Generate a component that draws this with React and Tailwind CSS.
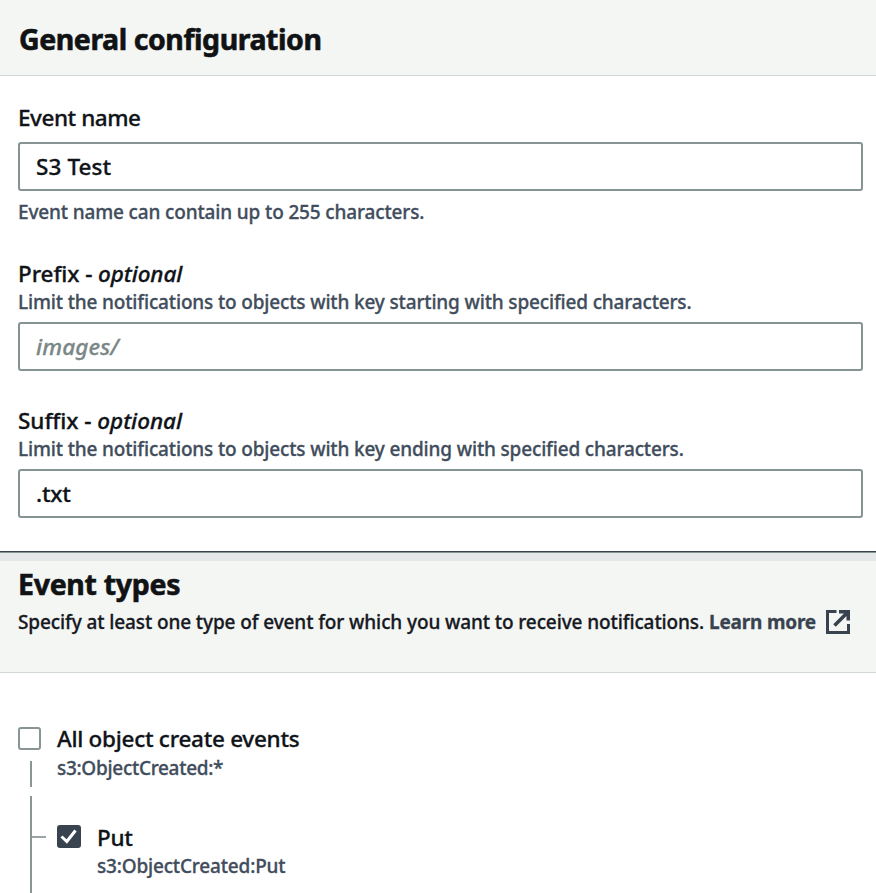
import React from 'react';

function Field({ label, optional, hint, value, placeholder, className, labelClass, valueClass, hintClass }) {
  return (
    <div className={className}>
      <label className="flex h-[30px] items-center text-[22.5px] leading-[30px] text-[#101419]">
        <span className={labelClass}>
          {label}
          {optional && <span> - <i>optional</i></span>}
        </span>
      </label>
      {hint && (
        <div className="mb-[6px] h-[27px] text-[19px] leading-[27px] text-[#414d5c]">
          <span className={hintClass}>{hint}</span>
        </div>
      )}
      <div className="flex h-[49px] items-center rounded-[3px] border-2 border-[#869393] bg-white px-4 pt-px text-[22.5px]">
        {value ? (
          <span className={valueClass}>{value}</span>
        ) : (
          <span className="tracking-[0.1px] italic text-[#7b8787]">{placeholder}</span>
        )}
      </div>
    </div>
  );
}

export default function App() {
  return (
    <div className="h-[893px] w-[876px] overflow-hidden bg-white font-['Noto_Sans',sans-serif] font-medium whitespace-nowrap [-webkit-text-stroke:0.3px_currentColor]">
      <header className="flex h-[76px] items-center border-b border-[#d0d5d5] bg-[#f4f6f4] pt-[2px] pl-[19px]">
        <h2 className="text-[28.5px] leading-10 font-bold tracking-[-0.45px] text-[#101214] [-webkit-text-stroke:0.6px_currentColor]">General configuration</h2>
      </header>
      <main className="flex h-[475px] flex-col pt-[27px] pr-[13px] pl-[18px]">
        <Field
          label="Event name"
          value="S3 Test"
          className="flex flex-col gap-[9px]"
          labelClass="tracking-[-0.45px]"
          valueClass="tracking-[0.1px] text-[#101419]"
        />
        <div className="mt-2 h-[27px] text-[19px] leading-[27px] tracking-[-0.15px] text-[#414d5c]">
          Event name can contain up to 255 characters.
        </div>
        <Field
          label="Prefix"
          optional
          hint="Limit the notifications to objects with key starting with specified characters."
          placeholder="images/"
          className="mt-[33px]"
          labelClass="tracking-[-0.1px]"
          hintClass="tracking-[-0.16px]"
        />
        <Field
          label="Suffix"
          optional
          hint="Limit the notifications to objects with key ending with specified characters."
          value=".txt"
          className="mt-[35px]"
          labelClass="tracking-[-0.05px]"
          hintClass="tracking-[-0.16px]"
          valueClass="tracking-[-0.2px] text-[#101419]"
        />
      </main>
      <section className="h-[122px] border-b border-[#d0d5d5] bg-[#f4f6f4]">
        <div className="h-px bg-[#38444e]" />
        <div className="h-px bg-[#87938f]" />
        <div className="h-2 bg-[#e4e8e8]" />
        <div className="pl-[18px]">
          <h2 className="h-[46px] text-[28.5px] leading-[47px] font-bold tracking-[-0.3px] text-[#101214] [-webkit-text-stroke:0.6px_currentColor]">Event types</h2>
          <div className="flex h-[30px] items-center text-[19px] leading-[30px] text-[#16191f]">
            <span className="w-[691px] tracking-[-0.11px]">
              Specify at least one type of event for which you want to receive notifications.
            </span>
            <span className="w-[117px] font-bold tracking-[-0.2px] text-[#38434f]">Learn more</span>
            <svg width="24" height="24" viewBox="0 0 24 24" fill="none" stroke="#38434f" strokeWidth="3">
              <path d="M10.5 1.5H1.5V22.5H22.5V14" />
              <path d="M13 1.7H22.3V10.5M21.5 2.5L8.5 15.5" strokeWidth="3.6" />
            </svg>
          </div>
        </div>
      </section>
      <section className="flex h-[220px] pt-[54px] pl-[18px]">
        <div className="flex w-[39px] flex-col">
          <div className="h-[23px] w-[23px] rounded-[3px] border-2 border-[#899494]" />
          <div className="mt-[11px] ml-[12px] h-[26px] w-[2px] bg-[#8a9696]" />
          <div className="mt-[9px] ml-[12px] flex h-[97px] w-[16px] border-l-2 border-[#8a9696]">
            <div className="mt-[40px] h-[2px] w-full bg-[#9ba5a5]" />
          </div>
        </div>
        <div className="flex flex-col">
          <div className="-mt-[3px] h-[31px] text-[22.5px] leading-[30px] tracking-[-0.28px] text-[#101419]">All object create events</div>
          <div className="h-[26px] text-[19px] leading-[26px] tracking-[-0.3px] text-[#414d5c]">s3:ObjectCreated:*</div>
          <div className="mt-[41px] flex">
            <div className="mt-[3px] flex h-[23px] w-6 items-center justify-center rounded-[3px] bg-[#39434f]">
              <svg width="24" height="23" viewBox="0 0 24 23" fill="none" stroke="white" strokeWidth="3">
                <path d="M4.5 11.5L9.8 16.5L18.5 5.5" />
              </svg>
            </div>
            <div className="ml-4">
              <div className="h-[31px] text-[22.5px] leading-[31px] tracking-[-0.3px] text-[#101419]">Put</div>
              <div className="h-[26px] text-[19px] leading-[26px] tracking-[-0.18px] text-[#414d5c]">s3:ObjectCreated:Put</div>
            </div>
          </div>
        </div>
      </section>
    </div>
  );
}
